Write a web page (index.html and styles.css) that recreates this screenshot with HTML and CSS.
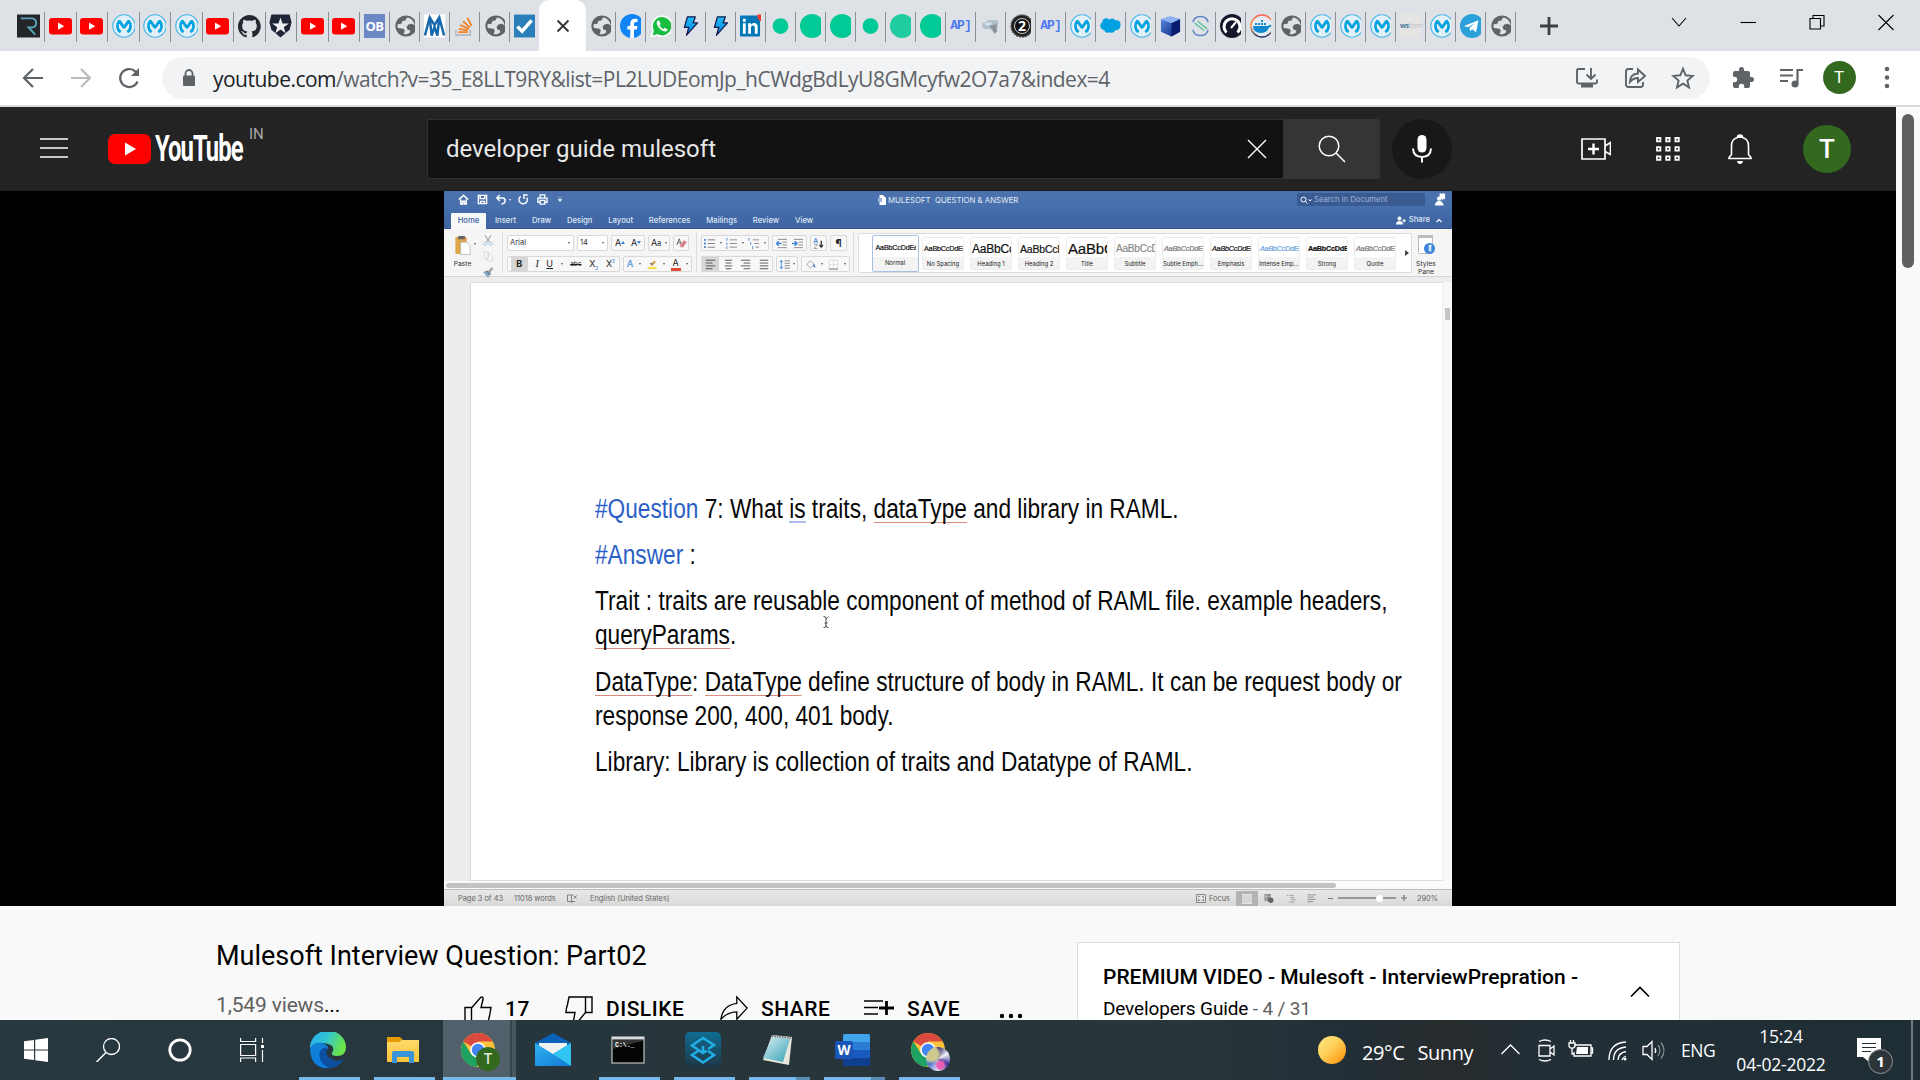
FILE: index.html
```html
<!DOCTYPE html>
<html lang="en">
<head>
<meta charset="utf-8">
<title>Mulesoft Interview Question: Part02 - YouTube</title>
<link rel="stylesheet" href="styles.css">
</head>
<body>
<svg class="defs" aria-hidden="true">
  <defs>
    <linearGradient id="gBolt" x1="0" y1="0" x2="0" y2="1"><stop offset="0" stop-color="#1fc0f5"/><stop offset="1" stop-color="#0a7fe0"/></linearGradient>
    <linearGradient id="gCube" x1="0" y1="0" x2="1" y2="1"><stop offset="0" stop-color="#5b8fe8"/><stop offset="1" stop-color="#0b1f7a"/></linearGradient>
    <linearGradient id="gDock" x1="0" y1="0" x2="0" y2="1"><stop offset="0" stop-color="#f6654f"/><stop offset=".5" stop-color="#f8a04d"/><stop offset="1" stop-color="#1c2c66"/></linearGradient>
    <linearGradient id="gEdge" x1="0" y1="0" x2="1" y2=".3"><stop offset="0" stop-color="#2ba8ee"/><stop offset=".5" stop-color="#2fc6d4"/><stop offset="1" stop-color="#6be34a"/></linearGradient>
    <linearGradient id="gEdge2" x1="0" y1="0" x2="0" y2="1"><stop offset="0" stop-color="#1181d6"/><stop offset="1" stop-color="#0a7de0"/></linearGradient>
    <linearGradient id="gSun" x1="0" y1="0" x2="1" y2="1"><stop offset="0" stop-color="#ffe985"/><stop offset=".45" stop-color="#ffd05a"/><stop offset="1" stop-color="#ff8c00"/></linearGradient>
    <linearGradient id="gFold" x1="0" y1="0" x2="0" y2="1"><stop offset="0" stop-color="#ffd96b"/><stop offset="1" stop-color="#f9c53a"/></linearGradient>
    <linearGradient id="gMail" x1="0" y1="0" x2="1" y2="1"><stop offset="0" stop-color="#2fb4f0"/><stop offset="1" stop-color="#1277d4"/></linearGradient>
    <linearGradient id="gShare" x1="0" y1="0" x2="0" y2="1"><stop offset="0" stop-color="#0e6d93"/><stop offset="1" stop-color="#1f3444"/></linearGradient>
    <linearGradient id="gPad" x1="0" y1="0" x2="1" y2="1"><stop offset="0" stop-color="#d8f0f2"/><stop offset="1" stop-color="#35a0b8"/></linearGradient>
  </defs>
  <symbol id="yt" viewBox="0 0 24 24" preserveAspectRatio="xMinYMid slice"><rect x="0" y="4" width="23" height="16.5" rx="3" fill="#f00"/><path d="M9 8.6v7.2l6.2-3.6z" fill="#fff"/></symbol>
  <symbol id="mu" viewBox="0 0 24 24" preserveAspectRatio="xMinYMid slice"><circle cx="12" cy="12" r="11.2" fill="#e3eff6" stroke="#3fb5e6" stroke-width="1.100"/><path d="M8.600 18.200A7.600 7.600 0 0 1 7.300 6.900L12 13.600l4.700-6.700a7.600 7.600 0 0 1-1.300 11.300" fill="none" stroke="#00a2df" stroke-width="2.700" stroke-linejoin="bevel"/></symbol>
  <symbol id="gl" viewBox="0 0 24 24" preserveAspectRatio="xMinYMid slice"><circle cx="12" cy="12" r="10.6" fill="#5f6368"/><path d="M13 3.4c3.8.3 7.4 3.700 7.600 8.200l-2.600-1.800-3.700.7-1.800 2.600 1.200 2.700 2.400.5v2.200c-2 1.600-4.500 2.200-6.500 1.700l1.200-3.600-1.300-1.900-5.600-.6c-.5-1.600-.5-2.600-.2-3.900l3.700-.4 1-2.700 3-.600z" fill="#dee1e6"/></symbol>
  <symbol id="gd" viewBox="0 0 24 24" preserveAspectRatio="xMinYMid slice"><circle cx="12" cy="12" r="12" fill="#00ca95"/></symbol>
  <symbol id="gs" viewBox="0 0 24 24"><circle cx="12" cy="12" r="9" fill="#00ca95"/></symbol>
  <symbol id="bolt" viewBox="0 0 24 24"><path d="M8.500 1.500h9l-2.500 7h5L7.500 22.500l2.500-9H5z" fill="url(#gBolt)" stroke="#111c50" stroke-width="1.500" stroke-linejoin="round"/></symbol>
  <symbol id="chrome" viewBox="0 0 36 36"><circle cx="18" cy="18" r="17" fill="#fbc43a"/><path d="M18 18L3.300 9.500A17 17 0 0 1 32.700 9.500H18z" fill="#db4a3e"/><path d="M3.300 9.500A17 17 0 0 0 16.500 35l7.500-12-12.500-.5z" fill="#1da261"/><circle cx="18" cy="18" r="7.800" fill="#fff"/><circle cx="18" cy="18" r="6.200" fill="#4285f4"/></symbol>
</svg>

<header class="tabstrip">
  <div class="tabs wide">
    <span class="tab"><svg viewBox="0 0 24 24"><path d="M0 0h24v24H0z" fill="#232528"/><path d="M4 4h11q5 0 5 5 0 4-5 4.500h-3l7 7.500" fill="none" stroke="#5aa3b8" stroke-width="2"/></svg></span>
    <span class="tab"><svg><use href="#yt"/></svg></span><span class="tab"><svg><use href="#yt"/></svg></span>
    <span class="tab"><svg><use href="#mu"/></svg></span><span class="tab"><svg><use href="#mu"/></svg></span><span class="tab"><svg><use href="#mu"/></svg></span>
    <span class="tab"><svg><use href="#yt"/></svg></span>
    <span class="tab"><svg viewBox="0 0 16 16"><path fill="#24292f" d="M8 .3C3.600.3 0 3.900 0 8.300c0 3.500 2.300 6.500 5.500 7.600.4.1.500-.2.500-.4v-1.400c-2.200.5-2.700-1-2.700-1-.4-.9-.9-1.200-.9-1.200-.7-.5.1-.5.1-.5.800.1 1.200.8 1.200.8.700 1.200 1.900.9 2.300.7.100-.5.300-.9.500-1.100-1.700-.2-3.600-.9-3.600-4 0-.9.300-1.600.8-2.100-.1-.2-.4-1 .1-2.100 0 0 .7-.2 2.200.8a7.500 7.500 0 0 1 4 0c1.500-1 2.200-.8 2.200-.8.400 1.100.2 1.900.1 2.100.5.600.8 1.300.8 2.100 0 3.100-1.900 3.700-3.700 3.900.3.300.6.800.6 1.500v2.200c0 .2.100.5.600.4A8 8 0 0 0 8 .3z"/></svg></span>
    <span class="tab"><svg viewBox="0 0 24 24"><path d="M2.500 0h19l2 8-2 8-9.500 8-9.500-8L.5 8z" fill="#1d2536"/><path d="M12 3l2.100 6.300h6.600l-5.300 4 2 6.300L12 15.700l-5.400 3.900 2-6.300-5.300-4h6.600z" fill="#eef0f3"/></svg></span>
    <span class="tab"><svg><use href="#yt"/></svg></span><span class="tab"><svg><use href="#yt"/></svg></span>
  </div>
  <div class="tabs">
    <span class="tab"><b class="ob">OB</b></span>
    <span class="tab"><svg><use href="#gl"/></svg></span>
    <span class="tab"><svg viewBox="0 0 22 24"><path d="M0 0h22v24H0z" fill="#fff"/><path d="M1 22L6 3l5 8 5-8 5 19M6 3l2 19 3-9 3 9 2-19" fill="none" stroke="#1769ad" stroke-width="2.600"/></svg></span>
    <span class="tab"><svg viewBox="0 0 22 24"><path d="M2 16v5.500h15V16" fill="none" stroke="#b9bcc0" stroke-width="2"/><path d="M4.500 18.500h10M5 15l9.500 1.500M6.500 11l9 4M9.500 7l7 6.500M14 3.500l4.500 8.500" stroke="#f48024" stroke-width="1.900"/></svg></span>
    <span class="tab"><svg><use href="#gl"/></svg></span>
    <span class="tab last"><svg viewBox="0 0 22 24"><path d="M0 0h22v24H0z" fill="#2a7fb9"/><path d="M3.500 12.500l5 5L18.500 6" fill="none" stroke="#fff" stroke-width="3.600"/></svg></span>
  </div>
  <div class="tab-active"><svg viewBox="0 0 14 14"><path d="M1.500 1.500l11 11M12.500 1.500l-11 11" stroke="#333639" stroke-width="1.900"/></svg></div>
  <div class="tabs">
    <span class="tab"><svg><use href="#gl"/></svg></span>
    <span class="tab"><svg viewBox="0 0 24 24" preserveAspectRatio="xMinYMid slice"><circle cx="12" cy="12" r="12" fill="#1185f5"/><path d="M10.300 24v-8.500H7.400V12h2.900V9.500c0-3 1.800-4.700 4.500-4.700l2.700.2v3H16c-1.500 0-2 .9-2 1.900V12h3.400l-.5 3.500H14V24z" fill="#fff"/></svg></span>
    <span class="tab"><svg viewBox="0 0 24 24" preserveAspectRatio="xMinYMid slice"><path d="M1.500 22.500l1.600-6A10 10 0 1 1 7.400 21z" fill="#19bd3f" stroke="#fff" stroke-width="1.500"/><path d="M8 6.500c-3 2 0 6.500 2.500 8.700 3 2.600 6.500 3.200 7.200.3l-3-1.800-1.500 1.300c-1.500-.6-3-2-3.600-3.500l1-1.400-1.200-3z" fill="#fff"/></svg></span>
    <span class="tab"><svg><use href="#bolt"/></svg></span><span class="tab"><svg><use href="#bolt"/></svg></span>
    <span class="tab"><svg viewBox="0 0 22 24"><rect y="1" width="21" height="22" rx="1" fill="#0077b5"/><path d="M3 9h3v11H3zM3 4.500h3v3H3zM8.500 9h3v1.600c2-3 7-2.300 7 2V20h-3v-6.500c0-2.800-4-2.800-4 0V20h-3z" fill="#fff"/><path d="M18 0h4v7q-4-1-4-7" fill="#f23c30"/></svg></span>
    <span class="tab"><svg><use href="#gs"/></svg></span><span class="tab"><svg><use href="#gd"/></svg></span><span class="tab"><svg><use href="#gd"/></svg></span>
    <span class="tab"><svg><use href="#gs"/></svg></span><span class="tab"><svg class="pale"><use href="#gd"/></svg></span><span class="tab"><svg><use href="#gd"/></svg></span>
    <span class="tab"><b class="api">AP]</b></span>
    <span class="tab"><svg viewBox="0 0 22 24"><path d="M2 12q0-4 4-4 3-4 7-2 4-1 6 1v6l-4 1q-2 3-6 1-5 1-7-3z" fill="#aebfcd"/><path d="M10 12l7-2 1 8-3 2-3-5z" fill="#8b949b"/><path d="M4 9l7-1 2 2-6 2z" fill="#d2e4f0"/></svg></span>
    <span class="tab"><svg viewBox="0 0 24 24" preserveAspectRatio="xMinYMid slice"><circle cx="12" cy="12" r="11" fill="#222" stroke="#555" stroke-width="1.500" stroke-dasharray="2 1"/><circle cx="12" cy="12" r="7.500" fill="#111" stroke="#ccc"/><text x="12" y="17" text-anchor="middle" class="two">2</text></svg></span>
    <span class="tab"><b class="api">AP]</b></span>
    <span class="tab"><svg><use href="#mu"/></svg></span>
    <span class="tab"><svg viewBox="0 0 22 24"><path d="M3 5.500q4-3 6.500 0 4-3 6.500.5 6-.5 5.500 5.500-.5 5-5.500 5-2 4-6 2-4 2-5.500-2Q0 15 .3 11.500.500 9 2.300 8z" fill="#00a1e0"/></svg></span>
    <span class="tab"><svg><use href="#mu"/></svg></span>
    <span class="tab"><svg viewBox="0 0 22 24"><path d="M1 5l10-3 10 3v13l-9 5-11-5z" fill="url(#gCube)"/><path d="M1 5l10-3 10 3-9 4z" fill="#8db4f2"/><path d="M12 9l9-4v13l-9 5z" fill="#0a1c6e"/></svg></span>
    <span class="tab"><svg viewBox="0 0 22 24"><path d="M3 8c2-8 14-8 16 0M3 16c2 8 14 8 16 0" fill="none" stroke="#5d83c4" stroke-width="1.500"/><path d="M5 9l10 8M8 7l10 8" stroke="#5fc296" stroke-width="1.400"/></svg></span>
    <span class="tab"><svg viewBox="0 0 24 24" preserveAspectRatio="xMinYMid slice"><circle cx="12" cy="12" r="12" fill="#15162c"/><path d="M6.500 18.500a8 8 0 1 1 11 0" fill="none" stroke="#fff" stroke-width="3"/><path d="M11 14l5-6" stroke="#fff" stroke-width="2"/></svg></span>
    <span class="tab"><svg viewBox="0 0 24 24" preserveAspectRatio="xMinYMid slice"><circle cx="12" cy="12" r="11" fill="#e6ebf2" stroke="url(#gDock)" stroke-width="1.500"/><path d="M3 12h15q2-2 4-1-1 2-3 2.500Q17 19 10 19q-7-1-7-7zM5 9h2v2H5zM8 9h2v2H8zM11 9h2v2h-2zM11 6h2v2h-2zM14 9h2v2h-2z" fill="#1088ce"/></svg></span>
    <span class="tab"><svg><use href="#gl"/></svg></span>
    <span class="tab"><svg><use href="#mu"/></svg></span><span class="tab"><svg><use href="#mu"/></svg></span><span class="tab"><svg><use href="#mu"/></svg></span>
    <span class="tab"><b class="ws"><i>ws</i>form</b></span>
    <span class="tab"><svg><use href="#mu"/></svg></span>
    <span class="tab"><svg viewBox="0 0 24 24" preserveAspectRatio="xMinYMid slice"><circle cx="12" cy="12" r="12" fill="#2ba0da"/><path d="M4 12l14.500-5.700-2.400 12-4-3-2 2-.5-3.400 5.500-5-7 4.400z" fill="#fff"/></svg></span>
    <span class="tab"><svg><use href="#gl"/></svg></span>
  </div>
  <svg class="plus" viewBox="0 0 18 18"><path d="M9 0v18M0 9h18" stroke="#3c4043" stroke-width="2.800"/></svg>
  <div class="winctl">
    <svg viewBox="0 0 18 18"><path d="M2 5l7 8 7-8" /></svg>
    <svg viewBox="0 0 18 18"><path d="M1.500 9.500h15.500"/></svg>
    <svg viewBox="0 0 18 18"><path d="M2 5.500h10.500v10.500H2zM5 5.500V2.500h11v10.500h-3.500"/></svg>
    <svg viewBox="0 0 18 18"><path d="M1.500 2l15 15M16.500 2l-15 15"/></svg>
  </div>
</header>

<nav class="toolbar">
  <svg class="nav" viewBox="0 0 24 24"><path d="M22 12H3M12 3l-9 9 9 9"/></svg>
  <svg class="nav off" viewBox="0 0 24 24"><path d="M2 12h19M12 3l9 9-9 9"/></svg>
  <svg class="nav" viewBox="0 0 24 24"><path d="M20.500 15.500A9 9 0 1 1 18.500 5.600L21 8"/><path d="M22 2v8h-8z" fill="#5f6368" stroke="none"/></svg>
  <div class="omnibox">
    <svg class="lock" viewBox="0 0 14 18"><rect x="1" y="6.500" width="12" height="10.500" rx="1" fill="#5f6368"/><path d="M3.500 7V4.500a3.500 3.500 0 0 1 7 0V7" fill="none" stroke="#5f6368" stroke-width="1.800"/></svg>
    <span class="url"><b>youtube.com</b>/watch?v=35_E8LLT9RY&amp;list=PL2LUDEomJp_hCWdgBdLyU8GMcyfw2O7a7&amp;index=4</span>
    <div class="omni-icons">
      <svg viewBox="0 0 24 24"><path d="M10 3H3.500Q2 3 2 4.500V16q0 1.500 1.500 1.500h17Q22 17.500 22 16v-2.500M16 2v10M11.500 8.500L16 13l4.500-4.500"/><path d="M6 18h12v3.500H6z" fill="#5f6368" stroke="none"/></svg>
      <svg viewBox="0 0 24 24"><path d="M10 3H5.500Q3 3 3 5.500v13Q3 21 5.500 21h12q2.500 0 2.500-2.500V16M7 16q0-8 8-8.500V3.500l7 6.500-7 6v-4q-5 0-8 4z"/></svg>
      <svg viewBox="0 0 24 24"><path d="M12 2.800l2.700 6.500 7 .6-5.300 4.600 1.600 6.900-6-3.700-6 3.700 1.600-6.900-5.300-4.600 7-.6z"/></svg>
    </div>
  </div>
  <div class="ext">
    <svg viewBox="0 0 24 24"><path d="M20.500 11H19V7a2 2 0 0 0-2-2h-4V3.500a2.500 2.500 0 0 0-5 0V5H4a2 2 0 0 0-2 2v3.800h1.500a2.700 2.700 0 0 1 0 5.400H2V20a2 2 0 0 0 2 2h3.800v-1.500a2.700 2.700 0 0 1 5.400 0V22H17a2 2 0 0 0 2-2v-4h1.500a2.500 2.500 0 0 0 0-5z" fill="#5f6368"/></svg>
    <svg viewBox="0 0 24 24"><path d="M1 4h13M1 9.500h13M1 15h8M18.500 18V4H24" fill="none" stroke="#5f6368" stroke-width="2.200"/><circle cx="16" cy="18" r="3.500" fill="#5f6368"/></svg>
    <span class="avatar small">T</span>
    <svg viewBox="0 0 24 24"><g fill="#5f6368"><circle cx="12" cy="3" r="2.300"/><circle cx="12" cy="11.500" r="2.300"/><circle cx="12" cy="20" r="2.300"/></g></svg>
  </div>
</nav>

<div class="page">
  <main class="content">
    <header class="masthead">
      <svg class="menu" viewBox="0 0 28 20"><path d="M0 1h28M0 10h28M0 19h28" stroke="#fff" stroke-width="1.500"/></svg>
      <div class="logo">
        <svg viewBox="0 0 43 30"><rect width="43" height="30" rx="7" fill="#f00"/><path d="M17 8.500v13l11-6.500z" fill="#fff"/></svg>
        <span class="word"><span>YouTube</span></span>
        <sup>IN</sup>
      </div>
      <div class="search">
        <span>developer guide mulesoft</span>
        <svg viewBox="0 0 20 20"><path d="M1 1l18 18M19 1L1 19" stroke="#fff" stroke-width="1.400"/></svg>
      </div>
      <div class="search-btn"><svg viewBox="0 0 28 28"><circle cx="11" cy="11" r="9.800"/><path d="M18 18l9 9"/></svg></div>
      <div class="mic"><svg viewBox="0 0 22 28"><rect x="6.500" y="0" width="9" height="17.500" rx="4.500" fill="#fff"/><path d="M2 13.500q.5 8.500 9 8.500t9-8.500M11 22v5.500" fill="none" stroke="#fff" stroke-width="2"/></svg></div>
      <div class="mast-right">
        <svg viewBox="0 0 30 30"><path d="M1 5h23v20H1zM24 12l5.500-3.500v12L24 17.500" fill="none" stroke="#fff" stroke-width="1.700"/><path d="M12.500 9.500v11M7 15h11" stroke="#fff" stroke-width="2.400"/></svg>
        <svg viewBox="0 0 30 30"><g fill="none" stroke="#fff" stroke-width="1.800"><path d="M4 4h3.400v3.400H4zM13.200 4h3.400v3.400h-3.400zM22.400 4h3.400v3.400h-3.400zM4 13.200h3.400v3.400H4zM13.200 13.200h3.400v3.400h-3.400zM22.400 13.200h3.400v3.400h-3.400zM4 22.400h3.400v3.400H4zM13.200 22.400h3.400v3.400h-3.400zM22.400 22.400h3.400v3.400h-3.400z"/></g></svg>
        <svg viewBox="0 0 30 30"><path d="M4 24.500v-1l2.500-3V12q0-7 6-8.500 0-2.500 2.500-2.500t2.500 2.500q6 1.500 6 8.500v8.500l2.500 3v1z" fill="none" stroke="#fff" stroke-width="1.600"/><path d="M12.500 1.500h5V4h-5zM12 27h6q-.5 3-3 3t-3-3z" fill="#fff"/></svg>
        <span class="avatar big">T</span>
      </div>
    </header>

    <section class="player">
      <div class="word-app">
        <div class="titlebar">
          <div class="quick">
            <svg viewBox="0 0 12 12"><path d="M1 6l5-4.500L11 6M3 6v5h2V8h2v3h2V6" fill="none" stroke="#fff" stroke-width="1.700"/></svg>
            <svg viewBox="0 0 12 12"><path d="M1.500 1.500h9v9h-9zM3.500 2v3h5V2M4 10.500V8h4v2.500" fill="none" stroke="#fff" stroke-width="1.500"/></svg>
            <svg viewBox="0 0 12 12"><path d="M4 1L1 4.300 4 7.500M1.500 4.300H7q3 0 3 3t-4 3.500" fill="none" stroke="#fff" stroke-width="1.600"/></svg>
            <i class="caret light"></i>
            <svg viewBox="0 0 12 12"><path d="M3 2.500A4.500 4.500 0 1 0 9.500 4M10.500 1H6.500v4.500" fill="none" stroke="#fff" stroke-width="1.600"/></svg>
            <svg viewBox="0 0 12 12"><path d="M3.500 4V1h5v3M3 9H1V4.500h10V9H9M3.500 7h5v4h-5z" fill="none" stroke="#fff" stroke-width="1.400"/></svg>
            <svg viewBox="0 0 12 12"><path d="M3.500 3.500h5M3.500 6h5L6 9z" fill="#fff" stroke="#fff" stroke-width=".8"/></svg>
          </div>
          <div class="docname"><svg viewBox="0 0 8 10"><path d="M1.500 0H5l3 3v7H1.500z" fill="#fff"/><path d="M0 3h4v4H0z" fill="#9ab8e2"/></svg>MULESOFT&nbsp; QUESTION &amp; ANSWER</div>
          <div class="docsearch"><svg viewBox="0 0 12 8"><circle cx="3.500" cy="3.500" r="2.500"/><path d="M5.500 5.500l2 2M8.500 3.500l1.500 1.300 1.500-1.300"/></svg>Search in Document</div>
          <svg class="person" viewBox="0 0 12 13"><path d="M5 0h6v6H9L7.500 8V6H5z" fill="#fff"/><circle cx="4.500" cy="5.500" r="2.400" fill="#fff"/><path d="M0 13q0-5 4.500-5 4 0 5 5z" fill="#fff"/></svg>
        </div>
        <div class="menubar">
          <span class="on">Home</span><span>Insert</span><span>Draw</span><span>Design</span><span>Layout</span><span>References</span><span>Mailings</span><span>Review</span><span>View</span>
          <div class="share"><svg viewBox="0 0 10 9"><circle cx="3.500" cy="2.500" r="2" fill="#fff"/><path d="M0 8.500q0-3.500 3.500-3.500T7 8.500zM6.300 4.200h3.700v1.100H6.300zM7.600 2.900h1.100v3.700H7.600z" fill="#fff"/></svg>Share<svg viewBox="0 0 8 8"><path d="M1.500 5.500L4 3l2.500 2.500" fill="none" stroke="#fff" stroke-width="1.200"/></svg></div>
        </div>
        <div class="ribbon">
          <div class="clip">
            <div class="paste"><svg viewBox="0 0 16 21"><rect x="0" y="2" width="12" height="18" rx="1" fill="#dfa64b"/><path d="M3 1h7v3.500H3z" fill="#666"/><path d="M5.500 7.500H12l3.500 3.500v9.500h-10z" fill="#fff" stroke="#aaa" stroke-width=".7"/></svg>Paste</div>
            <i class="caret"></i>
            <div class="clip-side">
              <svg viewBox="0 0 10 11"><path d="M2 0l4.500 7.500M8 0L3.500 7.500" stroke="#999" fill="none"/><circle cx="2.300" cy="8.800" r="1.600" fill="none" stroke="#a9c5e6"/><circle cx="7.700" cy="8.800" r="1.600" fill="none" stroke="#a9c5e6"/></svg>
              <svg viewBox="0 0 10 11"><path d="M1 1h4.500v6.500H1zM4 3h3l2 2v5H4z" fill="#fafafa" stroke="#d4d4d4" stroke-width=".8"/></svg>
              <svg viewBox="0 0 10 11"><path d="M9.500 1L6 5" stroke="#999" stroke-width="2"/><path d="M0 5l5-1.500 3 2.500-3 5z" fill="#85a9cf"/><path d="M3 4l4.500 3.500" stroke="#777" stroke-width="1.200"/></svg>
            </div>
          </div>
          <div class="grp font">
            <div class="row">
              <span class="box sel w67">Arial<i class="caret"></i></span>
              <span class="box sel w31">14<i class="caret"></i></span>
              <span class="box w32"><em class="a9">A<u class="up"></u></em><em class="a8">A<u class="dn"></u></em></span>
              <span class="box w21"><em class="a8">A<small>a</small></em><i class="caret"></i></span>
              <span class="box w15"><svg viewBox="0 0 14 14"><path d="M1 9L4 1l3 8M2 6h4" fill="none" stroke="#666" stroke-width="1.200"/><path d="M5 9l5-6 4 2-5 7q-4 1-4-3z" fill="#d78591"/></svg></span>
            </div>
            <div class="row">
              <span class="box w113"><em class="press">B</em><em class="it">I</em><em class="un">U</em><i class="caret"></i><em class="st">abc</em><em>X<sub>2</sub></em><em>X<sup>2</sup></em></span>
              <span class="box w69"><em class="ol">A</em><i class="caret"></i><svg viewBox="0 0 12 14"><path d="M4 8l4-6 2.500 1.500L6 9z" fill="#d9a545"/><path d="M2 6l4-2v4z" fill="#777"/><path d="M0 10h11v3H0z" fill="#f9df4a"/></svg><i class="caret"></i><em class="red">A</em><i class="caret"></i></span>
            </div>
          </div>
          <div class="grp para">
            <div class="row">
              <span class="box w68"><svg viewBox="0 0 12 12"><path d="M4 2h8M4 6h8M4 10h8" stroke="#777"/><path d="M0 2h2M0 6h2M0 10h2" stroke="#4a87d0" stroke-width="2"/></svg><i class="caret"></i><svg viewBox="0 0 12 12"><path d="M4 2h8M4 6h8M4 10h8" stroke="#888"/><path d="M1 0v3M1 5v3M1 9v3" stroke="#4a87d0"/></svg><i class="caret"></i><svg viewBox="0 0 12 12"><path d="M5 2h7M7 6h5M8 10h4" stroke="#888"/><path d="M1 0v3M3 4.500v3M5 9v3" stroke="#4a87d0"/></svg><i class="caret"></i></span>
              <span class="box w35"><svg viewBox="0 0 12 12"><path d="M2 1.500h10M7 4.500h5M7 7.500h5M2 10.500h10" stroke="#888"/><path d="M6 6H1M3 3.500L.5 6 3 8.500" stroke="#3f84d4" stroke-width="1.600" fill="none"/></svg><svg viewBox="0 0 12 12"><path d="M2 1.500h10M7 4.500h5M7 7.500h5M2 10.500h10" stroke="#888"/><path d="M0 6h5M3 3.500L5.500 6 3 8.500" stroke="#3f84d4" stroke-width="1.600" fill="none"/></svg></span>
              <span class="box w17"><svg viewBox="0 0 12 12"><path d="M1 5.500L3 0l2 5.500M1.500 4h3" stroke="#3f84d4" fill="none"/><path d="M1 7h4L1 11.500h4" stroke="#999" fill="none"/><path d="M9 3v7M7 7.500L9 10l2-2.500" stroke="#333" stroke-width="1.400" fill="none"/></svg></span>
              <span class="box w17"><em class="pil">¶</em></span>
            </div>
            <div class="row">
              <span class="box w72"><svg class="press" viewBox="0 0 18 14"><path d="M4 3h10M4 6h7M4 9h10M4 12h7" stroke="#555"/></svg><svg viewBox="0 0 18 14"><path d="M5 3h8M6 6h6M5 9h8M6 12h6" stroke="#555"/></svg><svg viewBox="0 0 18 14"><path d="M4 3h10M7 6h7M4 9h10M7 12h7" stroke="#555"/></svg><svg viewBox="0 0 18 14"><path d="M5 3h9M5 6h9M5 9h9M5 12h9" stroke="#555"/></svg></span>
              <span class="box w22"><svg viewBox="0 0 12 12"><path d="M6 2h6M6 4.700h6M6 7.300h6M6 10h6" stroke="#888"/><path d="M2.500 1v10M.5 3.500l2-2 2 2M.5 8.500l2 2 2-2" stroke="#3f84d4" fill="none"/></svg><i class="caret"></i></span>
              <span class="box w49"><svg viewBox="0 0 12 12"><path d="M2 6l4-4 4 4-4 4z" fill="#fff" stroke="#999"/><path d="M9 6l2 3" stroke="#3f84d4" stroke-width="1.600"/></svg><i class="caret"></i><svg viewBox="0 0 12 12"><path d="M1.500 1.500h9v9h-9zM6 1.500v9M1.500 6h9" fill="#fff" stroke="#ccc" stroke-width=".7"/><path d="M1 11h10" stroke="#777"/></svg><i class="caret"></i></span>
            </div>
          </div>
          <div class="gallery">
            <div class="style sel"><p>AaBbCcDdEe</p><span>Normal</span></div>
            <div class="style"><p>AaBbCcDdEe</p><span>No Spacing</span></div>
            <div class="style"><p class="h1">AaBbCc</p><span>Heading 1</span></div>
            <div class="style"><p class="h2">AaBbCcD</p><span>Heading 2</span></div>
            <div class="style"><p class="h0">AaBbC</p><span>Title</span></div>
            <div class="style"><p class="sub">AaBbCcD</p><span>Subtitle</span></div>
            <div class="style"><p class="em gray">AaBbCcDdEe</p><span>Subtle Emph...</span></div>
            <div class="style"><p class="em">AaBbCcDdEe</p><span>Emphasis</span></div>
            <div class="style"><p class="em blue">AaBbCcDdEe</p><span>Intense Emp...</span></div>
            <div class="style"><p class="bd">AaBbCcDdE</p><span>Strong</span></div>
            <div class="style"><p class="em gray">AaBbCcDdEe</p><span>Quote</span></div>
            <i class="next"></i>
          </div>
          <div class="pane"><svg viewBox="0 0 17 20"><rect x=".5" y=".5" width="14" height="18" rx="1" fill="#fff" stroke="#bbb"/><path d="M0 0h15v3H0z" fill="#bbb"/><circle cx="11.500" cy="13.500" r="5.500" fill="#3f86db"/><path d="M11 10.500h2.500M12.800 10.500v6M11.300 10.500v6" stroke="#fff"/></svg>Styles<br>Pane</div>
        </div>
        <div class="canvas">
          <article class="sheet">
            <div class="prose">
              <p><b>#Question</b> 7: What <u class="gram">is</u> traits, <u>dataType</u> and library in RAML.</p>
              <p><b>#Answer</b> :</p>
              <p>Trait : traits are reusable component of method of RAML file. example headers,<br><u>queryParams</u>.</p>
              <p><u>DataType</u>: <u>DataType</u> define structure of body in RAML. It can be request body or<br>response 200, 400, 401 body.</p>
              <p>Library: Library is collection of traits and Datatype of RAML.</p>
            </div>
            <svg class="ibeam" viewBox="0 0 6 12"><path d="M.5.500Q3 .5 3 2t2.500-1.500M3 2v8M.5 11.500Q3 11.500 3 10q0 1.500 2.500 1.500M1.500 7h3" fill="none" stroke="#333" stroke-width=".9"/></svg>
          </article>
          <div class="vscroll"><i></i></div>
        </div>
        <div class="hscroll"><i></i></div>
        <div class="status">
          <span class="pg">Page 3 of 43</span><span class="wd">11018 words</span>
          <svg class="book" viewBox="0 0 10 9"><path d="M.5 1h4v6.500h-4zM4.500 1H6M4.500 7.500H8M4.500 7v2M7 1.500l2.500 3M9.500 1.500L7 4.500" fill="none" stroke="#777" stroke-width=".9"/></svg>
          <span>English (United States)</span>
          <div class="views">
            <svg viewBox="0 0 10 9"><path d="M.5.500h9v8h-9zM2.500 3V2.500H4M6 2.500h1.500V4M2.500 5v1.500H4M7.500 5v1.500H6" fill="none" stroke="#888"/></svg>Focus
            <b><svg viewBox="0 0 10 10"><path d="M0 0h10v10H0z" fill="#e4e4e4"/><path d="M0 2h10M0 4h10M0 6h10M0 8h10" stroke="#bbb" stroke-width=".6"/></svg></b>
            <svg class="v1" viewBox="0 0 10 10"><path d="M0 0h7v8H0z" fill="#8a8a8a"/><circle cx="7" cy="7" r="3" fill="#666"/><path d="M2 0v8M0 2.500h7" stroke="#ddd" stroke-width=".6"/></svg>
            <svg class="v2" viewBox="0 0 10 10"><path d="M0 1.500h2M3 1.500h5M4 4h5M5 6.500h5M3 9h6" stroke="#999"/></svg>
            <svg class="v3" viewBox="0 0 10 10"><path d="M0 1h9M0 3.500h7M0 6h9M0 8.500h6" stroke="#888"/></svg>
            <i class="minus"></i><span class="zoom"><i></i></span><svg class="pl" viewBox="0 0 6 6"><path d="M3 0v6M0 3h6" stroke="#777" stroke-width="1.200"/></svg><span class="pct">290%</span>
          </div>
        </div>
      </div>
    </section>

    <section class="below">
      <div class="primary">
        <h1>Mulesoft Interview Question: Part02</h1>
        <div class="meta">
          <span class="views-n">1,549 views<b>...</b></span>
          <div class="actions">
            <svg class="like" viewBox="0 0 28 28"><path d="M1 11.500h6.500V28H1zM7.500 12L16.500 1.500q3-1.500 2.500 2L17 11.500h10L25.500 20l-2 8" /></svg><span class="n">17</span>
            <svg class="dis" viewBox="0 0 28 28"><path d="M20.500 1v15.500M20.500 1H27v15.500h-6.500L11 28q-3 0-2.500-3L10 16.500H1q0-4 1.500-8L4 1z"/></svg><span class="d">DISLIKE</span>
            <svg class="shr" viewBox="0 0 30 28"><path d="M1 25q2-15 17-17V1l11 12-11 12v-8q-10 0-17 8z"/></svg><span class="s">SHARE</span>
            <svg class="sav" viewBox="0 0 30 16"><path d="M0 1h19M0 7.500h14M0 14h14" stroke-width="1.500"/><path d="M22.500 1v14M15 8h15" stroke-width="2.800"/></svg><span class="v">SAVE</span>
            <svg class="dots" viewBox="0 0 24 6"><g fill="#000" stroke="none"><circle cx="3" cy="3" r="2.200"/><circle cx="12" cy="3" r="2.200"/><circle cx="21" cy="3" r="2.200"/></g></svg>
          </div>
        </div>
      </div>
      <aside class="playlist">
        <div><h2>PREMIUM VIDEO - Mulesoft - InterviewPrepration -</h2><p>Developers Guide <span>- 4 / 31</span></p></div>
        <svg viewBox="0 0 20 12"><path d="M1 10.500L10 1.500l9 9" fill="none" stroke="#000" stroke-width="1.700"/></svg>
      </aside>
    </section>
  </main>
  <div class="scrollbar"><i></i></div>
</div>

<footer class="taskbar">
  <div class="sys">
    <svg viewBox="0 0 24 24"><path d="M0 3.300L10 2v9.500H0zM11.200 1.800L24 0v11.500H11.200zM0 12.500h10V22L0 20.700zM11.200 12.500H24V24l-12.800-1.800z" fill="#fff"/></svg>
    <svg viewBox="0 0 24 24"><circle cx="15.500" cy="8.500" r="8" fill="none" stroke="#fff" stroke-width="1.300"/><path d="M10 14.500L.5 24" stroke="#fff" stroke-width="1.500"/></svg>
    <svg viewBox="0 0 24 24"><circle cx="12" cy="12" r="10.200" fill="none" stroke="#fff" stroke-width="2.800"/></svg>
    <svg viewBox="0 0 24 24"><path d="M.6 0v3.500h15V0M.6 6.500h15v11h-15zM.6 24v-4h15v4M22.500 0v5M22.500 12v12" fill="none" stroke="#fff" stroke-width="1.200"/><path d="M21 7h3v3h-3z" fill="#fff"/></svg>
  </div>
  <div class="apps">
    <span class="app run"><svg viewBox="0 0 36 36"><path d="M0 16A18 17 0 0 1 36 15q0 9-9 9-6 0-5-3 4-7-4-9Q8 9 0 16z" fill="url(#gEdge)"/><path d="M0 17q4-8 12-6 7 2 6 6-6 1-5 7 3 9 14 8-7 5-13 4Q1 34 0 17z" fill="url(#gEdge2)"/><path d="M17 15q-10 2-7 12 4 9 12 9 8-2 12-9-6 3-11 1-9-4-6-13z" fill="#0c4f9e"/></svg></span>
    <span class="app run"><svg viewBox="0 0 36 36"><path d="M2 5h13l3 3v5H2z" fill="#e59a06"/><path d="M2 10h12l3-2h17v22H2z" fill="url(#gFold)"/><path d="M7 31V21q0-2 2-2h18q2 0 2 2v10h-5v-6H12v6z" fill="#3994dc"/></svg></span>
    <span class="app run active stack"><svg viewBox="0 0 36 36"><use href="#chrome"/></svg><b>T</b></span>
    <span class="app"><svg viewBox="0 0 36 36"><path d="M0 11L18 1l18 10v8H0z" fill="#0a62b8"/><path d="M4 11h28v8L18 24 4 19z" fill="#f2f2f2"/><path d="M0 11l18 11 18-11v23H0z" fill="url(#gMail)"/><path d="M36 11v23L18 22z" fill="#31c5f4"/></svg></span>
    <span class="app run"><svg viewBox="0 0 36 36"><rect x="2" y="5" width="32" height="26" fill="#050505" stroke="#bfc3c5" stroke-width="1.200"/><path d="M2 5h32v2.500H2z" fill="#d8dbdc"/><path d="M3 17q16-5 30-8v-1H3z" fill="#333"/><text x="5" y="14.500" class="cmd">C:\._</text></svg></span>
    <span class="app run"><svg viewBox="0 0 36 36"><rect width="36" height="36" rx="5" fill="url(#gShare)"/><path d="M23 17l6-4-11-7-11 7.500L18 21l4-2.500M13 19l-6 4 11 7.500L29 23l-6-4M18 14v8" fill="none" stroke="#20aee4" stroke-width="2.600"/></svg></span>
    <span class="app run stack"><svg viewBox="0 0 36 36"><path d="M12 3l20 2-3 28-26-5z" fill="#e8e6da"/><path d="M12 5l18 2-7 23-20-4z" fill="url(#gPad)"/><path d="M12 4l19 2" stroke="#6d7a80" stroke-width="2" stroke-dasharray="1.500 1"/></svg></span>
    <span class="app run stack"><svg viewBox="0 0 36 36"><rect x="8" y="2" width="27" height="32" rx="1.500" fill="#41a5ee"/><path d="M8 10h27v8H8z" fill="#2b7cd3"/><path d="M8 18h27v8H8z" fill="#185abd"/><path d="M8 26h27v8H8z" fill="#103f91"/><rect x="0" y="9" width="18" height="18" rx="1.500" fill="#1a56b5"/><text x="9" y="23" text-anchor="middle" class="wmark">W</text></svg></span>
    <span class="app run"><svg viewBox="0 0 36 36"><use href="#chrome"/></svg><b class="pic"></b></span>
  </div>
  <div class="weather"><svg viewBox="0 0 28 28"><circle cx="14" cy="14" r="14" fill="url(#gSun)"/></svg><span>29°C</span><span>Sunny</span></div>
  <div class="tray">
    <svg viewBox="0 0 24 24"><path d="M3.500 16l9-9 9 9"/></svg>
    <svg viewBox="0 0 24 24"><path d="M5 7.500h11v10.500H5zM16 11l4-3v9l-4-3M5 3.500Q11 .5 17 3.500M5 21.500q6 3 12 0"/></svg>
    <svg class="bat" viewBox="0 0 24 24"><path d="M6 7h17v11H6V14M23 10h1.500v5H23M1 5h6v3.500q-3 3.500-6 0zM2.500 2v3M5.500 2v3M4 11v5h2"/><path d="M9 9h11v7H8z" fill="#fff" stroke="none"/></svg>
    <svg viewBox="0 0 24 24"><path d="M3 22Q3 5 20 4M7.500 22q0-12 12.500-13M12 22q0-7 8-8.500M16 22q1-3 4-4"/><circle cx="19" cy="21" r="1.500" fill="#fff" stroke="none"/></svg>
    <svg viewBox="0 0 24 24"><path d="M1 8.500h4l5-5v18l-5-5H1zM13 10q1.500 2.500 0 5"/><path d="M16 7q4 5 0 11M19 4.500q6 8 0 16" opacity=".45"/></svg>
    <span class="eng">ENG</span>
    <div class="clock">15:24<br>04-02-2022</div>
    <div class="notif"><svg viewBox="0 0 24 24"><path d="M0 0h24v19H12v5l-6-5H0z" fill="#fff"/><path d="M5 5.500h14M5 9.500h14M5 13.500h9" stroke="#1f2d34" stroke-width="1.200"/></svg><b>1</b></div>
    <i class="desk"></i>
  </div>
</footer>
</body>
</html>
```
FILE: styles.css
```css
* { box-sizing: border-box; }
body { margin: 0; width: 1920px; height: 1080px; overflow: hidden; display: flex; flex-direction: column; font-family: Roboto, sans-serif; background: #f9f9f9; }
svg { display: block; flex: none; }
p, h1, h2 { margin: 0; font-weight: 400; }
.defs { position: absolute; width: 0; height: 0; }

/* Browser tab strip */
.tabstrip { height: 51px; flex: none; background: #dee1e6; display: flex; padding-left: 13.500px; }
.tabs { display: flex; padding-top: 12px; height: 41px; }
.tab { width: 30px; height: 30px; display: flex; align-items: center; justify-content: center; border-right: 1.500px solid #8b8e92; }
.tab.last { border: 0; padding-right: 1px; }
.tab svg { width: 21px; height: 24px; margin-top: -2px; }
.wide .tab { width: 31.500px; }
.wide .tab svg { width: 23px; }
.pale { opacity: .85; }
.ob { width: 21px; height: 24px; margin-top: -2px; background: #6c87c6; color: #fff; font: 700 13px/24px "Open Sans", sans-serif; letter-spacing: -.5px; text-align: center; }
.api { font: 700 13px/24px "Liberation Mono", monospace; letter-spacing: -1px; color: #4d78ee; margin-top: -2px; }
.ws { width: 21px; height: 24px; margin-top: -2px; background: #e6e4e2; color: #b9c1c9; font: 400 7px/24px "Open Sans", sans-serif; letter-spacing: -.5px; white-space: nowrap; }
.ws i { color: #48749c; font-style: normal; font-weight: 700; }
.two { font: 700 14px "Open Sans", sans-serif; fill: #fff; }
.tab-active { width: 47px; margin-left: -1px; background: #fff; border-radius: 10px 10px 0 0; display: flex; justify-content: center; padding-top: 19px; }
.tab-active svg { width: 14px; height: 14px; }
.plus { width: 18px; height: 18px; margin: 17px 0 0 24px; }
.winctl { display: flex; margin: 13px 0 0 112px; gap: 51px; }
.winctl svg { width: 18px; height: 18px; fill: none; stroke: #000; stroke-width: 1.100; }

/* Address bar */
.toolbar { height: 56px; flex: none; background: #fff; border-bottom: 2px solid #d8dadc; display: flex; align-items: center; padding: 0 0 1px 21px; }
.nav { width: 24px; height: 24px; margin-right: 24px; fill: none; stroke: #5f6368; stroke-width: 2.200; }
.nav.off { stroke: #b9bbbd; }
.nav:nth-child(3) { margin-right: 21px; }
.omnibox { width: 1548px; height: 42px; border-radius: 21px; background: #f1f3f4; display: flex; align-items: center; padding: 0 15px 0 20px; }
.lock { width: 14px; height: 18px; margin-right: 17px; }
.url { font: 400 21px/30px "Open Sans", "Noto Sans", sans-serif; color: #5f6368; letter-spacing: -.515px; white-space: nowrap; padding-top: 2px; }
.url b { font-weight: 400; color: #202124; }
.omni-icons { margin-left: auto; display: flex; gap: 24px; }
.omni-icons svg { width: 24px; height: 24px; fill: none; stroke: #5f6368; stroke-width: 1.900; }
.ext { display: flex; align-items: center; gap: 24px; margin-left: 21px; }
.ext svg { width: 24px; height: 24px; }
.avatar { border-radius: 50%; background: #33691e; color: #fff; text-align: center; }
.avatar.small { width: 33px; height: 33px; margin: 0 -4.500px; font: 400 17px/33px Roboto, sans-serif; }
.avatar.big { width: 48px; height: 48px; font: 500 26px/48px Roboto, sans-serif; }

/* Page viewport and its scrollbar */
.page { flex: 1; min-height: 0; display: flex; }
.content { width: 1896px; height: 913px; overflow: hidden; }
.scrollbar { width: 24px; padding: 7px 6px; background: #fafafa; }
.scrollbar i { display: block; height: 154px; border-radius: 6px; background: #606060; }

/* YouTube header */
.masthead { height: 84px; background: #232323; display: flex; align-items: center; padding-left: 40px; border-bottom: 1px solid #1c1c1c; }
.menu { width: 28px; height: 20px; margin: -2px 40px 0 0; }
.logo { display: flex; align-items: center; width: 319px; }
.logo svg { width: 43px; height: 30px; }
.word { width: 88px; margin-left: 4px; }
.word span { display: inline-block; font: 700 37px/40px Roboto, sans-serif; letter-spacing: -1.500px; color: #fff; transform: scaleX(.644); transform-origin: 0 50%; }
.logo sup { color: #aaa; font-size: 15px; line-height: 15px; margin: -28px 0 0 6px; }
.search { width: 857px; height: 60px; background: #121212; border: 1px solid #303030; display: flex; align-items: center; justify-content: space-between; padding: 0 16px 0 18px; color: #e8e8e8; font-size: 24px; }
.search svg { width: 20px; height: 20px; }
.search-btn { width: 96px; height: 60px; background: #353535; border-radius: 0 3px 3px 0; display: flex; align-items: center; justify-content: center; }
.search-btn svg { width: 28px; height: 28px; fill: none; stroke: #fff; stroke-width: 1.500; }
.mic { width: 60px; height: 60px; border-radius: 50%; background: #181818; margin-left: 12px; display: flex; align-items: center; justify-content: center; }
.mic svg { width: 22px; height: 28px; }
.mast-right { margin-left: 129px; display: flex; align-items: center; gap: 42px; }
.mast-right svg { width: 30px; height: 30px; }
.mast-right .avatar { margin-left: 6px; }

/* Video frame */
.player { height: 715px; background: #000; padding-left: 444px; }
.word-app { width: 1008px; height: 715px; background: #ededed; font-family: Inter, sans-serif; display: flex; flex-direction: column; }
.titlebar { height: 18px; background: linear-gradient(#4c72ad, #4670ad); display: flex; align-items: center; padding: 0 0 1px 14px; color: #fff; font-size: 7.800px; }
.quick { display: flex; gap: 8px; width: 420px; }
.quick svg { width: 11px; height: 11px; }
.quick svg:last-child { width: 8px; }
.quick .light { border-top-color: #fff; margin: 5px -1px 0 -6px; }
.docname { display: flex; align-items: center; gap: 2px; width: 419px; color: #e3eaf5; white-space: nowrap; }
.docname svg { width: 8px; height: 10px; }
.docsearch { width: 128px; height: 13px; border-radius: 2px; background: #3a5a92; color: #9fb3d4; display: flex; align-items: center; gap: 2px; padding-left: 3px; font-size: 7.700px; white-space: nowrap; }
.docsearch svg { width: 12px; height: 8px; fill: none; stroke: #fff; stroke-width: 1; }
.person { width: 11px; height: 13px; margin-left: 10px; }
.menubar { height: 20px; background: linear-gradient(#446cab, #3f64a1); display: flex; align-items: flex-end; padding-left: 7px; color: #dfe7f4; font-size: 7.700px; font-weight: 500; border-bottom: 1px solid #35578f; }
.menubar > span { line-height: 14px; white-space: nowrap; margin-right: 15.800px; }
.menubar .on { width: 35px; background: #f7f7f7; color: #3b62a3; text-align: center; margin: 0 9px -1px 0; height: 16px; line-height: 15px; border-radius: 1px 1px 0 0; }
.share { margin-left: auto; display: flex; align-items: center; line-height: 16px; gap: 3px; padding-right: 9px; }
.share svg { width: 10px; height: 9px; }
.share svg:last-child { width: 8px; margin-left: 2px; }

.ribbon { height: 48px; background: #f5f5f5; border-bottom: 1px solid #d4d4d4; display: flex; font-size: 7px; color: #333; }
.clip { width: 59px; margin: 3px 0; padding: 3px 0 0 9px; border-right: 1px solid #ddd; display: flex; }
.paste { width: 19px; display: flex; flex-direction: column; align-items: center; gap: 5px; font-size: 6.700px; line-height: 8px; }
.paste svg { width: 16px; height: 20px; }
.clip .caret { margin: 8px 7px 0 2px; }
.clip-side { display: flex; flex-direction: column; gap: 5px; }
.clip-side svg { width: 10px; height: 11px; }
.caret { width: 0; height: 0; border: 1.500px solid transparent; border-top: 2.500px solid #555; border-bottom: 0; flex: none; }
.grp { border-right: 1px solid #ddd; margin: 3px 0; padding: 3px 0 0 4px; display: flex; flex-direction: column; gap: 5px; }
.font { width: 194px; }
.para { width: 157px; padding-left: 4px; }
.row { display: flex; gap: 3px; }
.box { height: 16px; border: 1px solid #d9d9d9; border-radius: 2px; background: #f8f8f8; display: flex; align-items: center; justify-content: space-around; line-height: 14px; }
.box svg { width: 11px; height: 11px; }
.box svg.press, .box svg[viewBox="0 0 18 14"] { width: 17px; height: 14px; }
.box svg.press { background: #d6d6d6; }
.box em { font: 400 9px/14px Inter, sans-serif; color: #222; }
.box.sel { justify-content: space-between; padding: 0 3px 0 2px; background: #fff; font-size: 7.500px; }
.w67 { width: 67px; } .w31 { width: 31px; } .w32 { width: 34px; } .w21 { width: 22px; } .w15 { width: 16px; }
.w113 { width: 113px; } .w69 { width: 69px; } .w68 { width: 68px; } .w35 { width: 35px; } .w17 { width: 17px; }
.w72 { width: 72px; } .w22 { width: 22px; } .w49 { width: 49px; }
.box u.up, .box u.dn { display: inline-block; border: 2px solid transparent; border-bottom: 3px solid #3f84d4; border-top: 0; vertical-align: 2px; }
.box u.dn { border-top: 3px solid #3f84d4; border-bottom: 0; }
.box em.press { background: #d6d6d6; font-weight: 700; width: 17px; text-align: center; margin-left: -1px; }
.box em.it { font: italic 400 10px/14px "Liberation Serif", serif; }
.box em.un { text-decoration: underline; }
.box em.st { text-decoration: line-through; font-size: 6.500px; }
.box sub, .box sup { font-size: 5px; line-height: 0; color: #3f84d4; }
.box em.ol { color: #6fa3dc; font-weight: 700; }
.box em.red { height: 13px; line-height: 10px; border-bottom: 3px solid #e04a30; width: 10px; text-align: center; }
.box em.pil { font-weight: 700; font-size: 10px; }
.gallery { margin: 4px 0 0 4px; width: 554px; height: 40px; background: #fff; border: 1px solid #ddd; border-radius: 2px; padding-left: 12px; display: flex; align-items: center; }
.style { width: 42px; height: 33px; margin: 0 3px; flex: none; border: 1px solid #ececec; border-radius: 2px; background: linear-gradient(#fff 0 60%, #f3f3f3 60%); text-align: center; overflow: hidden; }
.style.sel { width: 47px; height: 37px; margin: 0 .5px; border: 1.500px solid #a9bfe2; padding: 1px 2px 0; }
.style p { height: 22px; line-height: 22px; font: 400 7.200px/22px "Liberation Sans", sans-serif; letter-spacing: -.2px; text-align: left; padding-left: 1px; overflow: hidden; white-space: nowrap; color: #111; -webkit-text-stroke: .2px; }
.style span { display: block; font-size: 5.900px; line-height: 8px; white-space: nowrap; color: #222; }
.style p.h1 { font-size: 12px; } .style p.h2 { font-size: 10.500px; } .style p.h0 { font-size: 15px; }
.style p.sub { font-size: 10px; color: #888; }
.style p.em { font-style: italic; } .style p.gray { color: #777; } .style p.blue { color: #6d9fdc; } .style p.bd { font-weight: 700; }
.next { border: 3px solid transparent; border-left: 4px solid #444; border-right: 0; margin-left: 6px; }
.pane { width: 28px; padding-top: 6px; text-align: center; font-size: 6.800px; line-height: 8px; }
.pane svg { width: 17px; height: 20px; margin: 0 auto 5px; }

.canvas { height: 604px; padding: 5px 0 0 26px; display: flex; }
.sheet { position: relative; width: 974px; height: 599px; background: #fff; border: 1px solid #dcdcdc; border-right-color: #eee; padding: 209px 0 0 124px; }
.prose { width: 0; font: 400 27px/34.300px "Liberation Sans", Arial, sans-serif; color: #080808; white-space: nowrap; transform: scaleX(.84); transform-origin: 0 0; }
.prose p { margin-bottom: 11.800px; }
.prose b { font-weight: 400; color: #2b5fc7; }
.prose u { text-decoration: none; border-bottom: 1.500px solid #dc8b80; display: inline-block; line-height: 27px; height: 27px; }
.prose u.gram { border-bottom: 2.500px solid #abbdec; }
.ibeam { position: absolute; left: 352px; top: 333px; width: 6px; height: 12px; }
.vscroll { flex: 1; background: #f8f8f8; padding: 26px 2px 0 2px; }
.vscroll i { display: block; width: 5px; height: 12px; background: #c4c4c4; }
.hscroll { height: 9px; background: #fafafa; padding: 2px 2px; border-bottom: 1px solid #bbb; }
.hscroll i { display: block; width: 890px; height: 5px; border-radius: 3px; background: #c3c3c3; }
.status { height: 16px; background: linear-gradient(#e8e8e8, #d9d9d9); display: flex; align-items: center; padding-left: 14px; font-size: 7.400px; color: #666; }
.pg { width: 56px; } .wd { width: 53px; }
.book { width: 10px; height: 9px; margin-right: 13px; }
.status span { white-space: nowrap; }
.views { margin-left: auto; display: flex; align-items: center; height: 16px; gap: 3px; }
.views > svg { width: 10px; height: 9px; }
.views b { width: 22px; height: 15px; background: #b3b3b3; padding: 3px 6px; margin-left: 3px; }
.views .v1 { margin-left: 3px; } .views .v2 { margin-left: 9px; } .views .v3 { margin-left: 8px; }
.minus { width: 5px; height: 1px; background: #777; margin-left: 8px; }
.zoom { width: 58px; height: 2px; background: #999; margin: 0 2px; }
.zoom i { display: block; width: 7px; height: 7px; border-radius: 50%; background: #fff; margin: -2.500px 0 0 38px; }
.views .pl { width: 6px; height: 6px; }
.pct { width: 42px; padding: 0 0 0 7px; }

/* Under the player */
.below { display: flex; padding-left: 216px; height: 114px; background: #f9f9f9; }
.primary { width: 861px; }
.primary h1 { font-size: 27px; line-height: 36px; margin-top: 32px; }
.meta { display: flex; height: 46px; }
.views-n { width: 248px; color: #606060; font-size: 21px; line-height: 30px; padding-top: 16px; letter-spacing: -.15px; }
.views-n b { color: #030303; font-weight: 400; }
.actions { display: flex; font-size: 21px; font-weight: 500; line-height: 24px; padding-top: 19px; letter-spacing: .5px; }
.actions svg { fill: none; stroke: #000; stroke-width: 1.400; width: 28px; height: 28px; margin-top: 3px; overflow: visible; }
.actions span { margin-top: 4px; display: block; }
.n { width: 60px; margin-left: 13px; }
.d { width: 114px; margin-left: 13px; }
.actions .shr { margin-top: 2px; }
.s { width: 103px; margin-left: 13px; }
.actions .sav { width: 30px; height: 16px; margin-top: 7px; }
.v { width: 92px; margin-left: 13px; }
.actions .dots { width: 24px; height: 6px; margin-top: 20px; }
.playlist { width: 603px; margin-top: 36px; height: 120px; background: #fff; border: 1px solid #ddd; padding: 19px 29px 0 25px; display: flex; justify-content: space-between; }
.playlist h2 { font-size: 21px; font-weight: 500; line-height: 30px; white-space: nowrap; }
.playlist p { font-size: 19px; line-height: 24px; margin-top: 5px; }
.playlist p { letter-spacing: -.15px; }
.playlist p span { color: #606060; }
.playlist svg { width: 20px; height: 12px; margin-top: 24px; }

/* Windows taskbar */
.taskbar { height: 60px; flex: none; display: flex; background: linear-gradient(90deg, #283840 0, #27363c 30%, #28353a 62%, #222f37 70%, #272b2c 75.500%, #222f37 80%, #1f2d35 100%); color: #fff; font-family: "Open Sans", "Noto Sans", sans-serif; }
.sys { display: flex; align-items: center; gap: 48px; padding: 0 28px 0 24px; }
.sys svg { width: 24px; height: 24px; }
.apps { display: flex; width: 1026px; }
.app { width: 75px; height: 60px; padding: 12px 8px 0 7px; position: relative; flex: none; }
.app > svg { width: 36px; height: 36px; margin: 0 auto 0 11px; }
.app.run { background: linear-gradient(#76b9ed, #76b9ed) 7px 100% / 61px 3px no-repeat; }
.app.stack { background: linear-gradient(90deg, #76b9ed 47px, #5a8db5 47px) 7px 100% / 61px 3px no-repeat; }
.app.active { background: linear-gradient(#76b9ed, #76b9ed) 1px 100% / 73px 3px no-repeat, linear-gradient(90deg, #51606a 67px, #35444d 67px 69px, #46555e 69px) 1px 0 / 73px 60px no-repeat; }
.app b { position: absolute; left: 34px; top: 27px; width: 24px; height: 24px; border-radius: 50%; background: #33691e; font: 500 14px/24px Roboto, sans-serif; text-align: center; color: #dfe8da; }
.app b.pic { background: radial-gradient(circle at 25% 30%, #cfc98f 0 25%, transparent 40%), radial-gradient(circle at 60% 75%, #e85fb4 0 15%, transparent 25%), conic-gradient(#2c2470, #f4f4fa, #3a2f9a, #f0e9ff, #4a6fd0, #b9e0d4, #2c2470); }
.cmd { font: 700 6.500px "Liberation Mono", monospace; fill: #fff; }
.wmark { font: 700 13.500px "Open Sans", sans-serif; fill: #fff; }
.weather { display: flex; align-items: center; width: 180px; font-size: 20px; gap: 13px; white-space: nowrap; }
.weather svg { width: 28px; height: 28px; margin-right: 3px; }
.weather span { margin-top: 4px; letter-spacing: -.4px; }
.tray { display: flex; align-items: center; flex: 1; }
.tray > svg { width: 24px; height: 24px; fill: none; stroke: #fff; stroke-width: 1.300; margin-right: 12px; overflow: visible; }
.tray > .bat { margin: 0 14px 0 -2px; }
.eng { font-size: 17.500px; width: 52px; letter-spacing: -.4px; margin-left: 3px; }
.clock { width: 96px; text-align: center; font-size: 17.500px; line-height: 28px; letter-spacing: -.2px; white-space: nowrap; }
.notif { position: relative; width: 24px; height: 24px; margin: 0 30px 0 28px; }
.notif svg { width: 24px; height: 24px; }
.notif b { position: absolute; left: 11px; top: 11px; width: 25px; height: 25px; border-radius: 50%; background: #2e3538; border: 1px solid #8d9396; font: 700 15px/23px "Open Sans", sans-serif; text-align: center; }
.desk { width: 2px; height: 60px; background: #6f7b81; }
```
